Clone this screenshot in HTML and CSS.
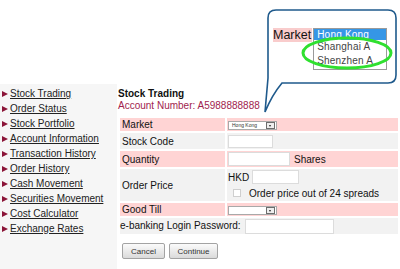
FILE: index.html
```html
<!DOCTYPE html>
<html>
	<head>
		<meta charset="utf-8" />
		<title>Stock Trading</title>
		<link rel="stylesheet" href="styles.css">
	</head>
	<body>
		<div class="top"></div>
		<div class="page">
			<ul class="nav">
				<li><a href="">Stock Trading</a></li>
				<li><a href="">Order Status</a></li>
				<li><a href="">Stock Portfolio</a></li>
				<li><a href="">Account Information</a></li>
				<li><a href="">Transaction History</a></li>
				<li><a href="">Order History</a></li>
				<li><a href="">Cash Movement</a></li>
				<li><a href="">Securities Movement</a></li>
				<li><a href="">Cost Calculator</a></li>
				<li><a href="">Exchange Rates</a></li>
			</ul>
			<div class="main">
				<h1 class="title">Stock Trading</h1>
				<p class="acct">Account Number: A5988888888</p>
				<table class="form">
					<tr class="pink r13">
						<td class="lbl">Market</td>
						<td class="val"><span class="sel"><span class="sel-txt">Hong Kong</span><span class="sel-btn"></span></span></td>
					</tr>
					<tr class="gray r16">
						<td class="lbl">Stock Code</td>
						<td class="val"><input type="text" class="txt w45" /></td>
					</tr>
					<tr class="pink r16">
						<td class="lbl">Quantity</td>
						<td class="val"><input type="text" class="txt w62" /><span class="unit">Shares</span></td>
					</tr>
					<tr class="gray r32">
						<td class="lbl">Order Price</td>
						<td class="val top-val">
							<div class="op-line">HKD<input type="text" class="txt w47 ml3" /></div>
							<div class="op-line2"><span class="chk"></span><span class="chk-txt">Order price out of 24 spreads</span></div>
						</td>
					</tr>
					<tr class="pink r13">
						<td class="lbl">Good Till</td>
						<td class="val"><span class="sel"><span class="sel-txt"></span><span class="sel-btn"></span></span></td>
					</tr>
					<tr class="gray r16">
						<td class="pw" colspan="2">e-banking Login Password:<input type="password" class="txt w89 ml4" /></td>
					</tr>
				</table>
				<div class="btns">
					<button class="btn w43">Cancel</button>
					<button class="btn w49">Continue</button>
				</div>
			</div>
		</div>

		<!-- zoom callout over the market select -->
		<div class="callout">
			<svg class="bubble" width="140" height="115" viewBox="0 0 140 115">
				<path d="M22 83 L128 83 Q136 83 136 75 L136 18 Q136 10 128 10 L16 10 Q8 10 8 18 L8 78 L5 112 Q12 95 22 83 Z" fill="#fff" stroke="#1f5a8c" stroke-width="1.6"/>
			</svg>
			<div class="co-inner">
				<span class="co-label">Market</span>
				<ul class="co-list">
					<li class="hl">Hong Kong</li>
					<li>Shanghai A</li>
					<li>Shenzhen A</li>
				</ul>
			</div>
			<svg class="ring" width="140" height="115" viewBox="0 0 140 115">
				<ellipse cx="87" cy="53" rx="44" ry="15" fill="none" stroke="#2fe02f" stroke-width="3"/>
			</svg>
		</div>
	</body>
</html>
```

FILE: styles.css
```css
body,ul,li,p,h1{
	margin: 0;
	padding: 0;
}
body{
	font-family: "Liberation Sans", Arial, sans-serif;
	font-size: 10px;
	color: #111;
	background: #fff;
	position: relative;
	height: 269px;
	overflow: hidden;
}
li{
	list-style: none;
}
a{
	color: #222;
	text-decoration: underline;
}
.top{
	height: 84px;
}
.page{
	display: flex;
}
.nav{
	width: 117px;
	height: 185px;
	padding-top: 2px;
	box-sizing: border-box;
	background: #f6f6f6;
}
.nav li{
	display: flex;
	align-items: center;
	line-height: 15px;
}
.nav li::before{
	content: "";
	width: 0;
	height: 0;
	border-left: 6px solid #8b1538;
	border-top: 3.5px solid transparent;
	border-bottom: 3.5px solid transparent;
	margin: 0 2px 0 2px;
}
.main{
	flex: 1;
	padding: 4px 0 0 1px;
}
.title{
	font-size: 10px;
	font-weight: bold;
	line-height: 12px;
}
.acct{
	color: #a11d4e;
	line-height: 11px;
}
.form{
	margin-top: 5px;
	border-spacing: 2px;
	width: 282px;
	margin-left: 0;
	position: relative;
	left: -2px;
	left: 0;
}
.form td{
	padding: 0;
	vertical-align: middle;
}
.pink td{
	background: #ffd4d4;
}
.gray td{
	background: #f2f2f2;
}
.r13{
	height: 13px;
}
.r16{
	height: 16px;
}
.r32{
	height: 32px;
}
.lbl{
	width: 103px;
	padding-left: 2px !important;
}
.val{
	padding-left: 1px !important;
}
.top-val{
	vertical-align: top !important;
	padding-top: 1px !important;
}
.txt{
	display: inline-block;
	box-sizing: border-box;
	height: 14px;
	border: 1px solid #dcdcdc;
	background: #fff;
	padding: 0;
	margin: 0;
	vertical-align: middle;
	outline: none;
}
.w45{
	width: 45px;
	height: 13px;
}
.w62{
	width: 62px;
}
.w47{
	width: 47px;
}
.w89{
	width: 89px;
	height: 15px;
}
.ml3{
	margin-left: 3px;
}
.ml4{
	margin-left: 4px;
}
.unit{
	margin-left: 4px;
	vertical-align: middle;
}
.op-line{
	display: flex;
	align-items: center;
	height: 14px;
}
.op-line2{
	display: flex;
	align-items: center;
	height: 12px;
	margin-top: 3px;
}
.chk{
	width: 6px;
	height: 6px;
	border: 1px solid #cfcfcf;
	background: #fff;
	margin-left: 5px;
}
.chk-txt{
	margin-left: 8px;
}
.sel{
	display: inline-flex;
	align-items: center;
	justify-content: space-between;
	box-sizing: border-box;
	width: 49px;
	height: 9px;
	border: 1px solid #a9a9a9;
	background: #fff;
	vertical-align: middle;
}
.sel-txt{
	font-size: 5px;
	line-height: 7px;
	padding-left: 3px;
	color: #333;
}
.sel-btn{
	position: relative;
	box-sizing: border-box;
	width: 9px;
	height: 7px;
	border: 1px solid #6d6d6d;
	background: #eee;
	margin-right: 1px;
}
.sel-btn::after{
	content: "";
	position: absolute;
	left: 2px;
	top: 2px;
	width: 0;
	height: 0;
	border-top: 2px solid #222;
	border-left: 1.5px solid transparent;
	border-right: 1.5px solid transparent;
}
.pw{
	white-space: nowrap;
}
.btns{
	display: flex;
	margin: 7px 0 0 4px;
}
.btn{
	box-sizing: border-box;
	height: 16px;
	padding: 0;
	margin-right: 4px;
	font-family: "Liberation Sans", Arial, sans-serif;
	font-size: 8px;
	color: #333;
	background: linear-gradient(#fbfbfb, #dadada);
	border: 1px solid #a3a3a3;
	border-radius: 2px;
}
.w43{
	width: 43px;
}
.w49{
	width: 49px;
}
.callout{
	position: absolute;
	left: 260px;
	top: 0;
	width: 140px;
	height: 115px;
}
.bubble,.ring{
	position: absolute;
	left: 0;
	top: 0;
}
.co-inner{
	position: relative;
	display: flex;
	align-items: flex-start;
	padding: 28px 0 0 13px;
}
.co-label{
	background: #f9cccc;
	font-size: 12.5px;
	line-height: 14px;
	padding-right: 1px;
	color: #111;
}
.co-list{
	width: 74px;
	box-sizing: border-box;
	margin-left: 1px;
	border: 1px solid #9a9a9a;
	background: #fff;
	padding-bottom: 1px;
}
.co-list li{
	height: 14px;
	line-height: 14px;
	padding-left: 3px;
	color: #444;
	letter-spacing: 0.2px;
}
.co-list .hl{
	height: 11px;
	line-height: 11px;
	background: #3596e6;
	color: #fff;
}
```
